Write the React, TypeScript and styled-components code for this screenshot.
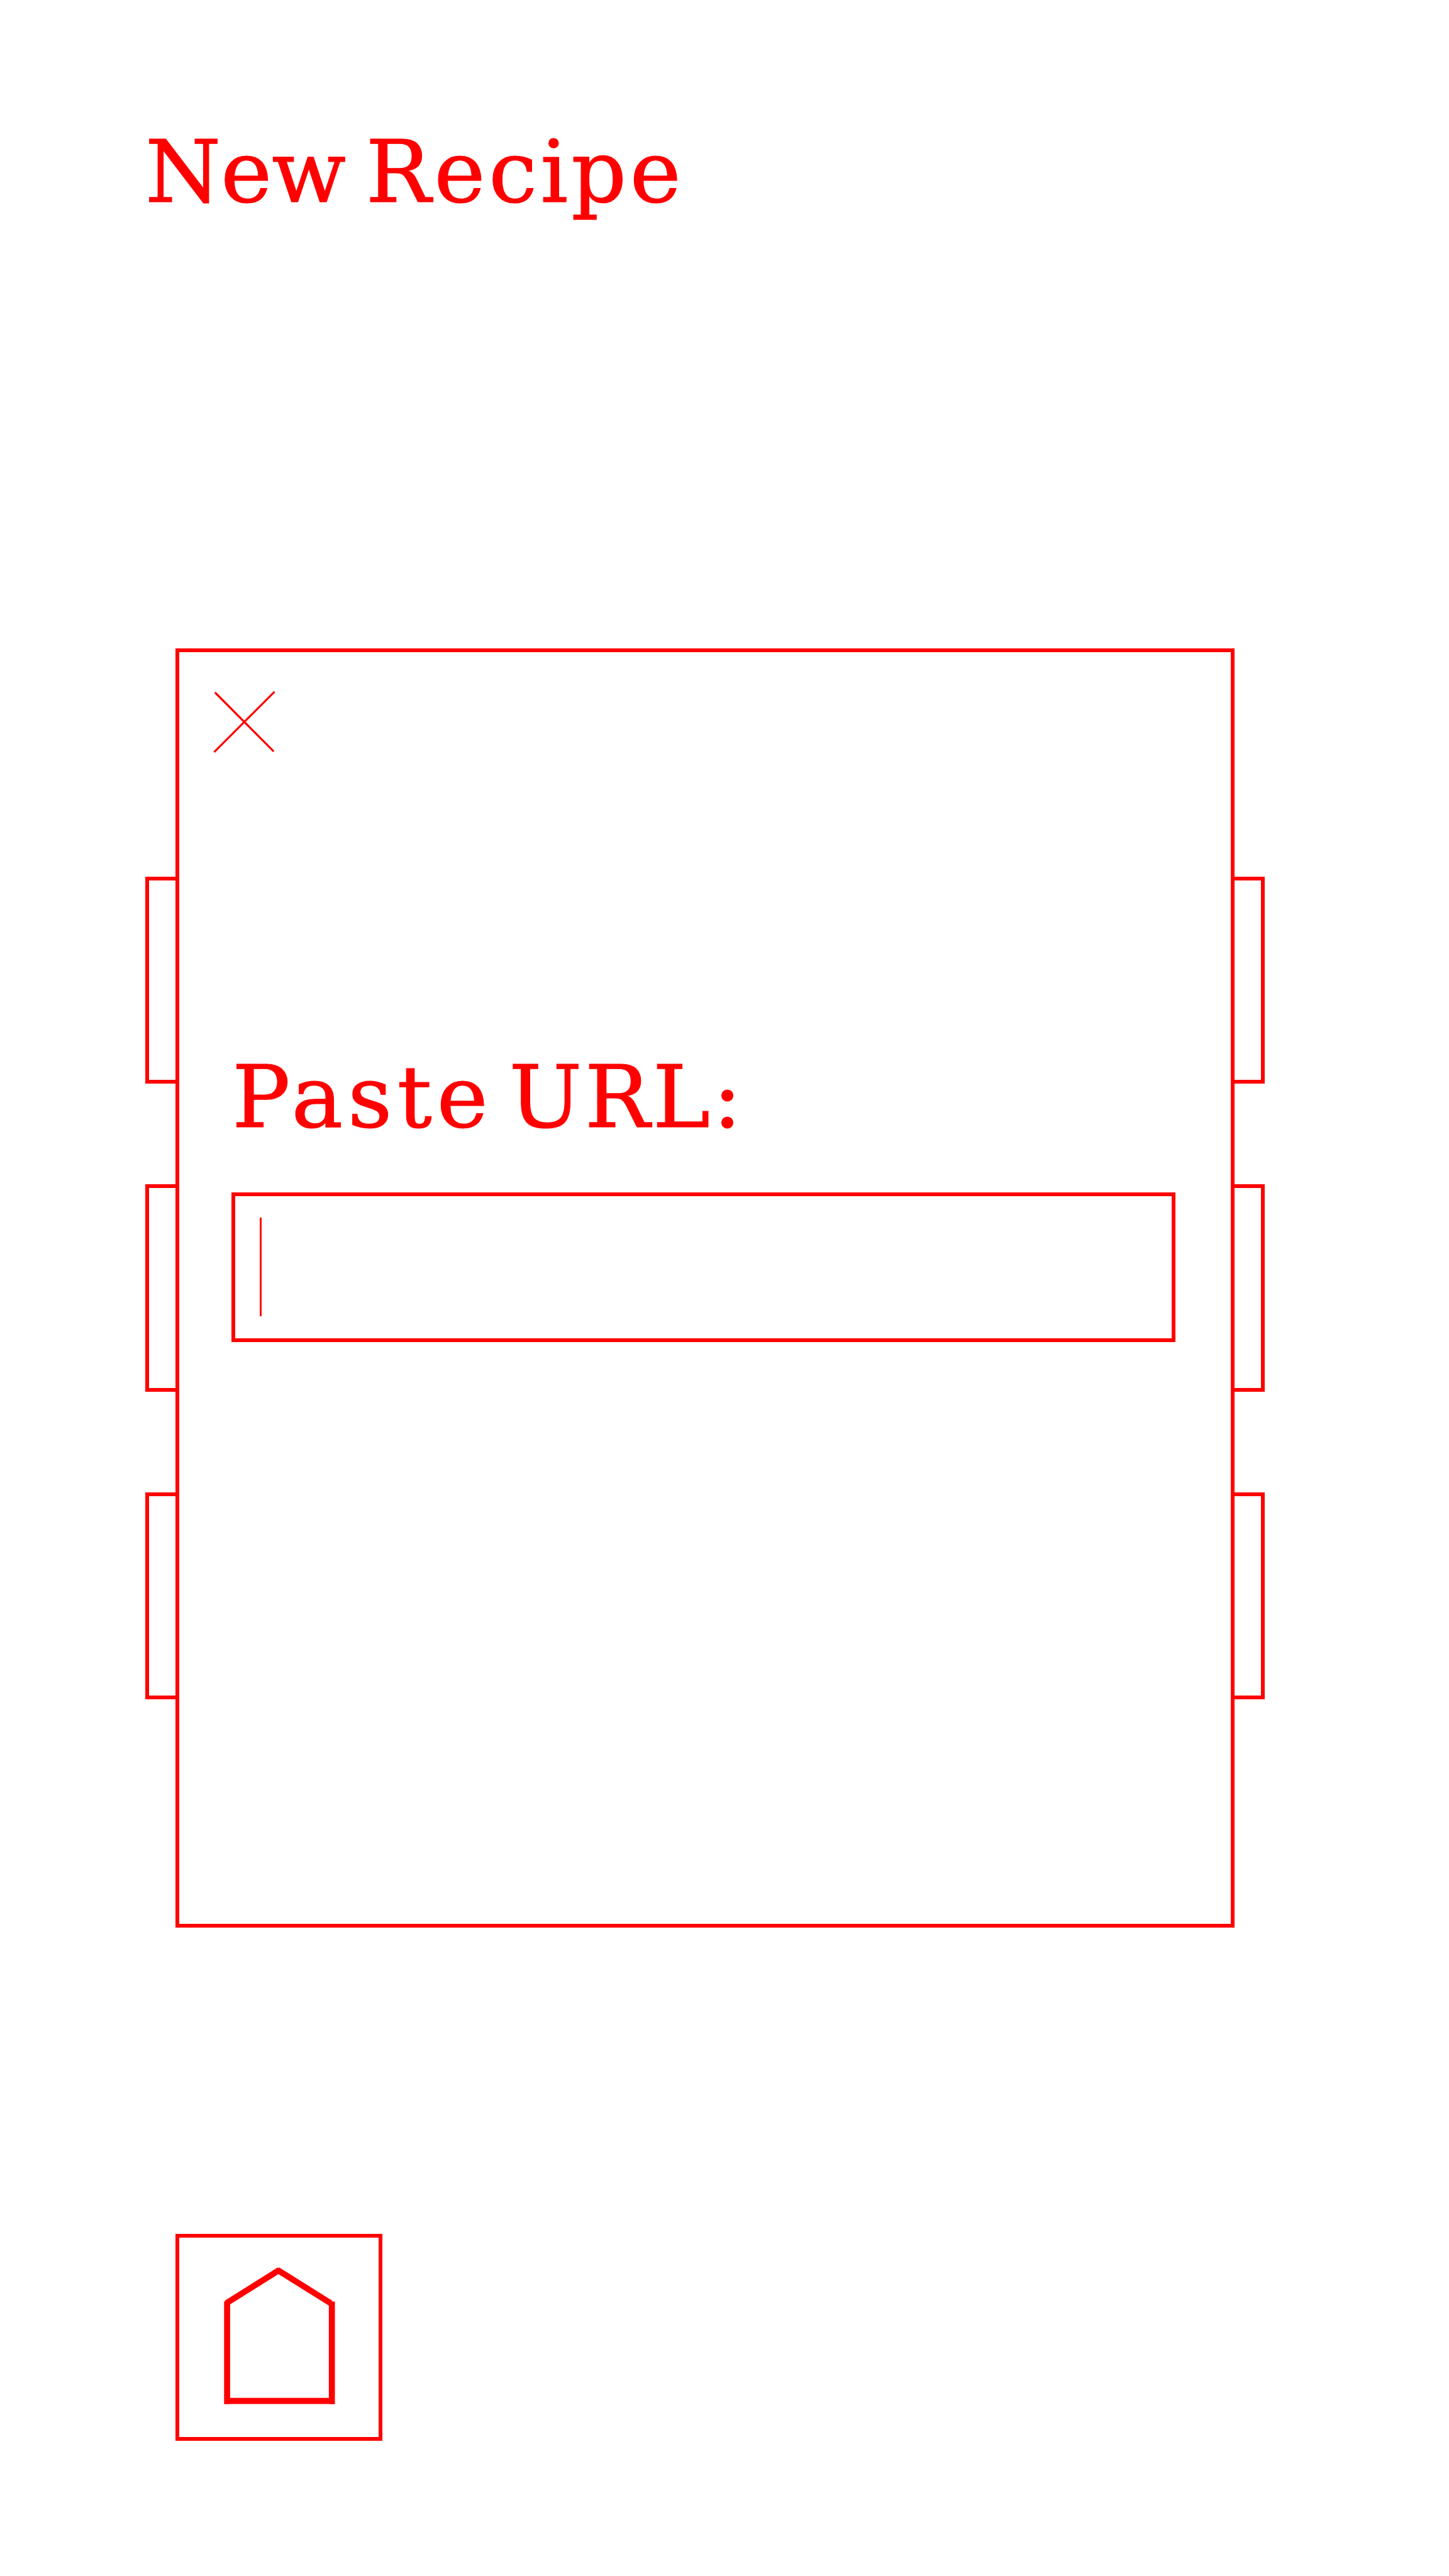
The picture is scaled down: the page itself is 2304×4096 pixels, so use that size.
import React from "react";
import styled, { createGlobalStyle } from "styled-components";

const RED = "#ff0000";

const GlobalStyle = createGlobalStyle`
  *, *::before, *::after { box-sizing: border-box; }
  body { margin: 0; background: #ffffff; }
`;

const Page = styled.main`
  display: flex;
  flex-direction: column;
  align-items: flex-start;
  width: 2304px;
  height: 4096px;
  overflow: hidden;
  background: #ffffff;
  color: ${RED};
  font-family: "DejaVu Serif", serif;
`;

const Title = styled.h1`
  height: 160px;
  margin: 193px 0 0 231px;
  font-size: 137.6px;
  font-weight: 400;
  line-height: 160px;
  white-space: nowrap;
  -webkit-text-stroke: 1.2px ${RED};
`;

const Word = styled.span<{ $spacing: number; $shift?: number }>`
  margin-left: ${(p) => p.$shift ?? 0}px;
  letter-spacing: ${(p) => p.$spacing}px;
`;

const Binder = styled.section`
  display: flex;
  align-items: flex-start;
  height: 2034px;
  margin: 678px 0 0 231px;
`;

const TabColumn = styled.div`
  display: flex;
  flex-direction: column;
  gap: 160px;
  padding-top: 363px;
`;

const Tab = styled.div<{ $side: "left" | "right"; $height: number }>`
  width: 48px;
  height: ${(p) => p.$height}px;
  border: 6px solid ${RED};
  ${(p) => (p.$side === "left" ? "border-right: 0;" : "border-left: 0;")}
`;

const Card = styled.div`
  display: flex;
  flex-direction: column;
  align-items: flex-start;
  width: 1684px;
  height: 2034px;
  border: 6px solid ${RED};
`;

const CloseButton = styled.button`
  width: 100px;
  height: 100px;
  margin: 61px 0 0 53px;
  padding: 0;
  border: 0;
  background: none;
  svg { display: block; }
`;

const Label = styled.label`
  height: 160px;
  margin: 466px 0 0 84px;
  font-size: 137.6px;
  line-height: 160px;
  white-space: nowrap;
  -webkit-text-stroke: 1.2px ${RED};
`;

const UrlField = styled.div`
  width: 1501px;
  height: 238px;
  margin: 72px 0 0 83px;
  padding: 34px 0 0 39px;
  border: 6px solid ${RED};
`;

const Caret = styled.div`
  width: 3px;
  height: 157px;
  background: ${RED};
`;

const HomeButton = styled.button`
  width: 329px;
  height: 329px;
  margin: 487px 0 0 279px;
  padding: 0;
  border: 6px solid ${RED};
  background: none;
  svg { display: block; }
`;

const TAB_HEIGHTS = [329, 330, 329];

function Tabs({ side }: { side: "left" | "right" }) {
  return (
    <TabColumn>
      {TAB_HEIGHTS.map((height, i) => (
        <Tab key={i} $side={side} $height={height} />
      ))}
    </TabColumn>
  );
}

function CloseIcon() {
  return (
    <svg width="100" height="100" viewBox="0 0 100 100" stroke={RED} strokeWidth="3.2" fill="none">
      <path d="M3.8 3L97.2 96.8M2.5 97.9L98.5 1.9" />
    </svg>
  );
}

function HomeIcon() {
  return (
    <svg width="317" height="317" viewBox="0 0 317 317" stroke={RED} strokeWidth="9.6" fill="none">
      <path d="M76.1 101.5V264.7M242.7 101.5V264.7M72 259.6H247" />
      <path d="M74.9 104.3L159.2 51.4M156.3 51.4L240.8 104.3" />
    </svg>
  );
}

export default function App() {
  return (
    <>
      <GlobalStyle />
      <Page>
        <Title>
          <Word $spacing={-0.3}>New</Word>{" "}
          <Word $spacing={5.2} $shift={-12}>Recipe</Word>
        </Title>
        <Binder>
          <Tabs side="left" />
          <Card>
            <CloseButton aria-label="Close">
              <CloseIcon />
            </CloseButton>
            <Label>
              <Word $spacing={7.8}>Paste</Word>{" "}
              <Word $spacing={4.3} $shift={-18}>URL:</Word>
            </Label>
            <UrlField>
              <Caret />
            </UrlField>
          </Card>
          <Tabs side="right" />
        </Binder>
        <HomeButton aria-label="Home">
          <HomeIcon />
        </HomeButton>
      </Page>
    </>
  );
}
